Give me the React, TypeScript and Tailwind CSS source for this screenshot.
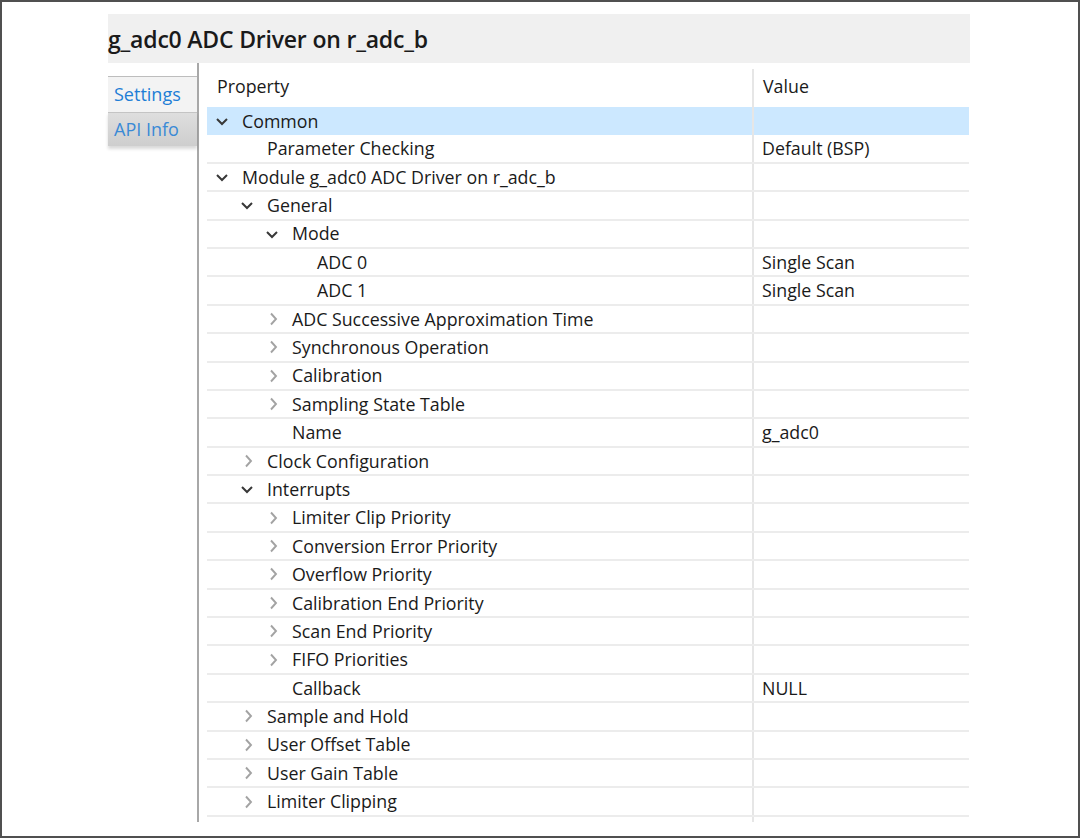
type Row = {
  level: number;
  label: string;
  toggle?: "open" | "closed";
  value?: string;
  selected?: boolean;
};

const rows: Row[] = [
  { level: 0, label: "Common", toggle: "open", selected: true },
  { level: 1, label: "Parameter Checking", value: "Default (BSP)" },
  { level: 0, label: "Module g_adc0 ADC Driver on r_adc_b", toggle: "open" },
  { level: 1, label: "General", toggle: "open" },
  { level: 2, label: "Mode", toggle: "open" },
  { level: 3, label: "ADC 0", value: "Single Scan" },
  { level: 3, label: "ADC 1", value: "Single Scan" },
  { level: 2, label: "ADC Successive Approximation Time", toggle: "closed" },
  { level: 2, label: "Synchronous Operation", toggle: "closed" },
  { level: 2, label: "Calibration", toggle: "closed" },
  { level: 2, label: "Sampling State Table", toggle: "closed" },
  { level: 2, label: "Name", value: "g_adc0" },
  { level: 1, label: "Clock Configuration", toggle: "closed" },
  { level: 1, label: "Interrupts", toggle: "open" },
  { level: 2, label: "Limiter Clip Priority", toggle: "closed" },
  { level: 2, label: "Conversion Error Priority", toggle: "closed" },
  { level: 2, label: "Overflow Priority", toggle: "closed" },
  { level: 2, label: "Calibration End Priority", toggle: "closed" },
  { level: 2, label: "Scan End Priority", toggle: "closed" },
  { level: 2, label: "FIFO Priorities", toggle: "closed" },
  { level: 2, label: "Callback", value: "NULL" },
  { level: 1, label: "Sample and Hold", toggle: "closed" },
  { level: 1, label: "User Offset Table", toggle: "closed" },
  { level: 1, label: "User Gain Table", toggle: "closed" },
  { level: 1, label: "Limiter Clipping", toggle: "closed" },
];

const indent = ["pl-[9px]", "pl-[34px]", "pl-[59px]", "pl-[84px]"];

function Chevron({ open }: { open: boolean }) {
  if (open) {
    return (
      <svg width="12" height="14" viewBox="0 0 12 14" fill="none">
        <path d="M1 5 L6 10 L11 5" stroke="#383838" strokeWidth="2" />
      </svg>
    );
  }
  return (
    <svg width="12" height="14" viewBox="0 0 12 14" fill="none">
      <path d="M5 1.5 L10 7 L5 12.5" stroke="#a3a3a3" strokeWidth="1.9" />
    </svg>
  );
}

export default function App() {
  return (
    <div
      className="w-[1080px] h-[838px] bg-white border-2 border-[#505050] pl-[106px] pt-[12px] text-[#1a1a1a]"
      style={{ fontFamily: '"Open Sans", "Noto Sans", sans-serif' }}
    >
      <div className="w-[862px]">
        {/* Title bar */}
        <div className="h-[49px] bg-[#f0f0f0] flex items-center pt-[2px]">
          <h1 className="text-[23px] font-semibold tracking-[-0.2px] leading-none">
            g_adc0 ADC Driver on r_adc_b
          </h1>
        </div>

        <div className="flex">
          {/* Tabs */}
          <div className="w-[91px] h-[759px] border-r-2 border-[#a8a8a8] pt-[13px] shrink-0">
            <div className="border-t border-[#bdbdbd] h-[36px] bg-[#f3f3f3] flex items-center pl-[6px] text-[18px] text-[#1e7ed6]">
              Settings
            </div>
            <div className="border-t border-[#c4c4c4] h-[34px] bg-gradient-to-b from-[#dedede] to-[#cecece] flex items-center pl-[6px] text-[18px] text-[#3a8ad6] shadow-[0_3px_3px_rgba(0,0,0,0.15)]">
              API Info
            </div>
          </div>

          {/* Property table */}
          <div className="ml-[8px] w-[762px] text-[17.8px]">
            <div className="flex h-[44px]">
              <div className="w-[545px] flex items-center pl-[10px] pt-[2px]">Property</div>
              <div className="flex-1 mt-[6px] border-l-2 border-[#e6e6e6] flex items-center pl-[9px] pb-[4px]">
                Value
              </div>
            </div>
            {rows.map((r, i) => (
              <div
                key={i}
                className={
                  "flex h-[28.4px] " +
                  (r.selected ? "bg-[#cce8ff]" : "border-b-2 border-[#ececec]")
                }
              >
                <div className={"w-[545px] flex items-center " + indent[r.level]}>
                  <span className="w-[12px] h-[14px] flex items-center justify-center">
                    {r.toggle && <Chevron open={r.toggle === "open"} />}
                  </span>
                  <span className="ml-[14px] whitespace-nowrap">{r.label}</span>
                </div>
                <div className="flex-1 border-l-2 border-[#e6e6e6] flex items-center pl-[8px] whitespace-nowrap">
                  {r.value}
                </div>
              </div>
            ))}
            <div className="flex h-[5px]">
              <div className="w-[545px]" />
              <div className="flex-1 border-l-2 border-[#e6e6e6]" />
            </div>
          </div>
        </div>
      </div>
    </div>
  );
}
